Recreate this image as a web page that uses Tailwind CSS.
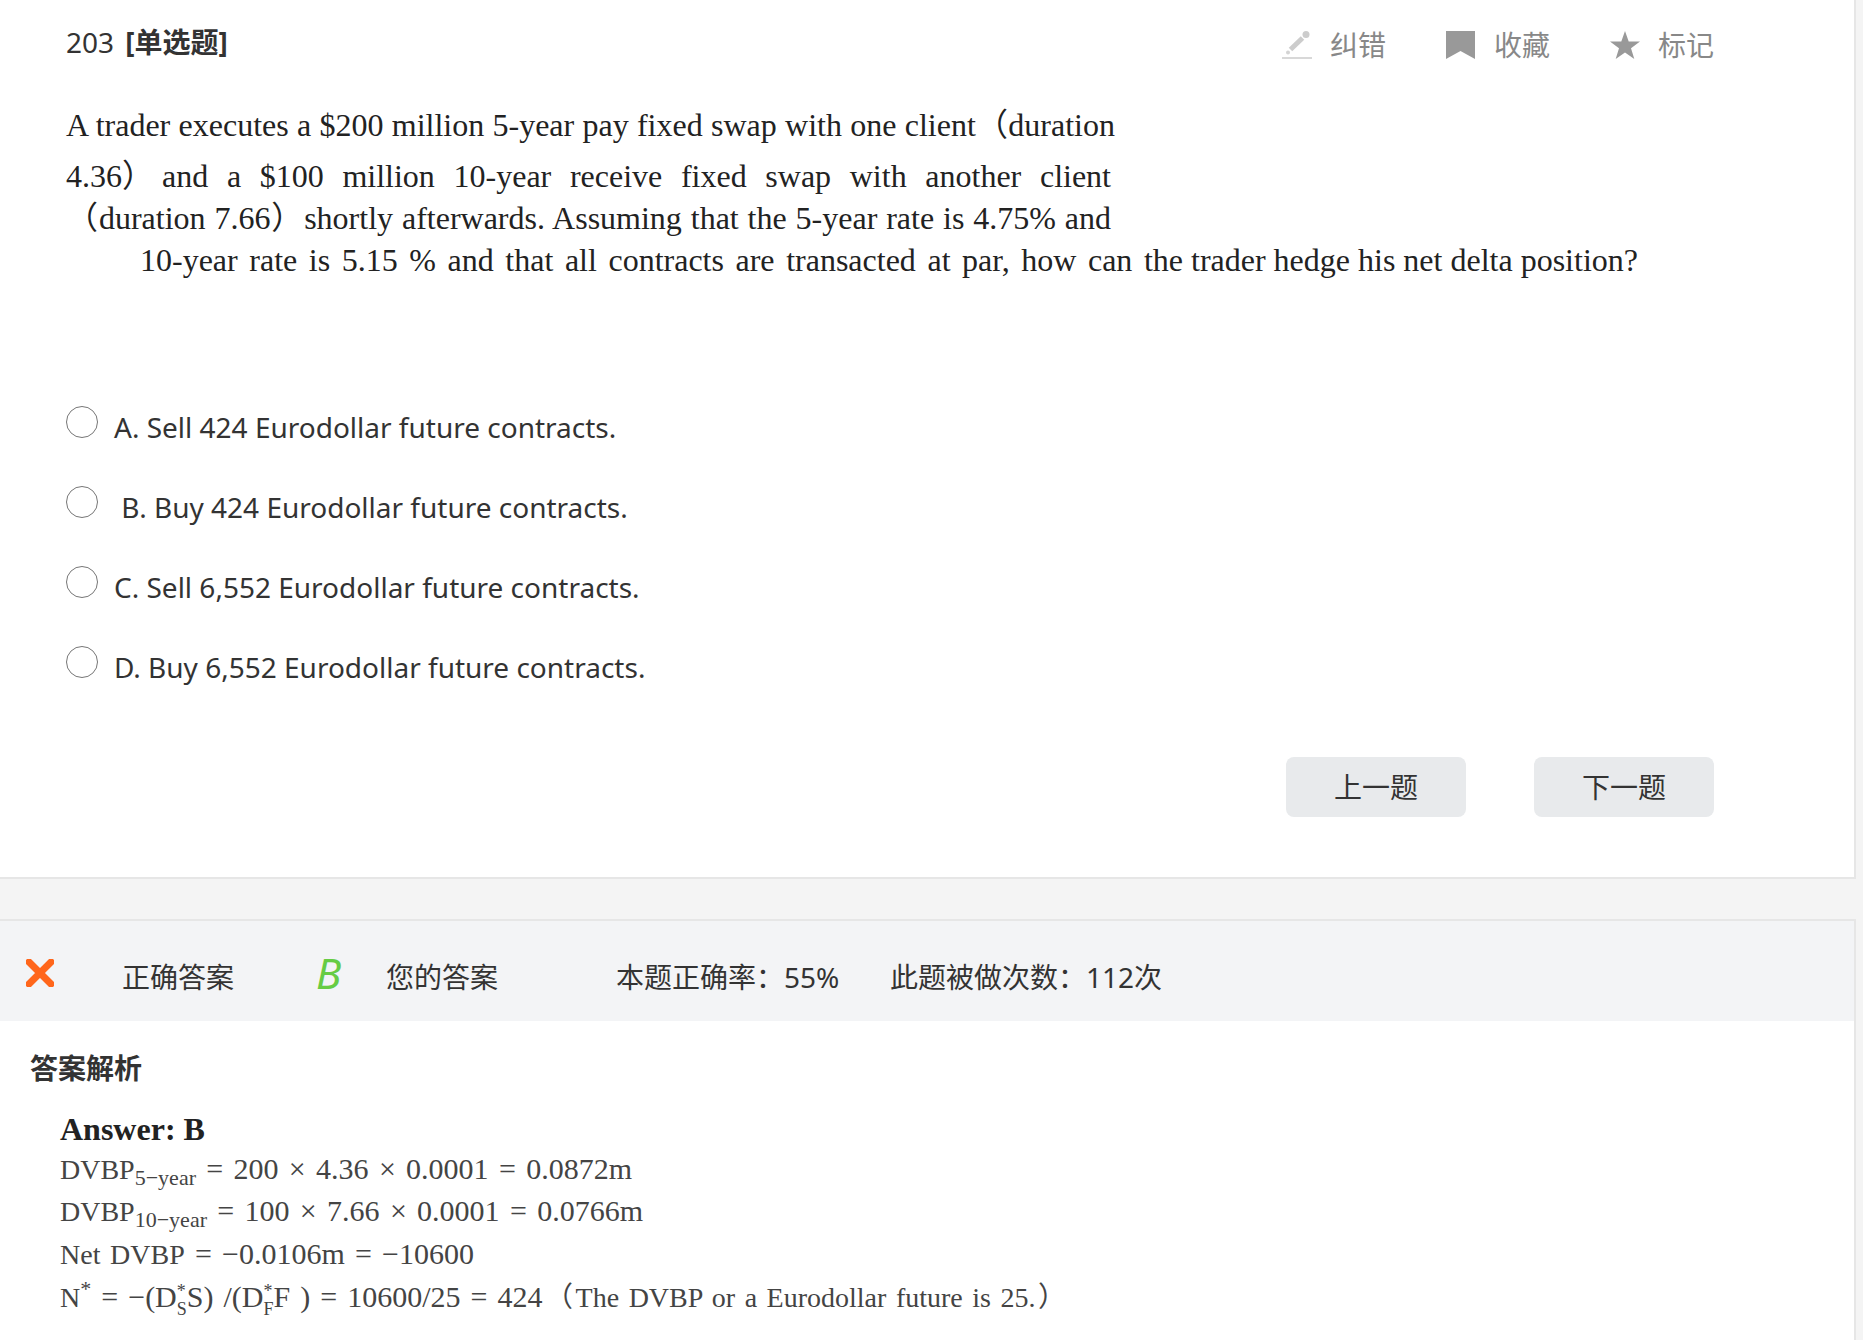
<!DOCTYPE html>
<html lang="zh-CN">
    <head>
        <meta charset="UTF-8">
        <title>203 单选题</title>
        <script src="https://cdn.jsdelivr.net/npm/@tailwindcss/browser@4"></script>
    </head>
    <body class="min-h-screen flex flex-col pr-[7px] bg-[#f4f4f4] text-[#333] text-[28px] leading-[42px] font-['Noto_Sans','Noto_Sans_CJK_SC',sans-serif]">
        <!-- Question -->
        <form class="bg-white border-r-2 border-b-2 border-[#e6e6e6] pt-6 pb-[60px] pl-[66px] pr-[140px]">
            <div class="flex items-start justify-between">
                <h1 class="leading-9">203 <b class="ml-1">[单选题]</b></h1>
                <div class="flex gap-[60px] text-[#888]">
                    <button type="button" class="flex items-center gap-[18px]">
                        <svg class="w-[30px] h-7" viewBox="0 0 30 28">
                            <path d="M8.500 18.500L20.500 7" stroke="#ccc" stroke-width="5"/>
                            <circle cx="6" cy="21.500" r="2" fill="#d4d4d4"/>
                            <circle cx="24" cy="3.500" r="3.500" fill="#ccc"/>
                            <path d="M0 27h30" stroke="#d8d8d8" stroke-width="2"/>
                        </svg>
                        纠错
                    </button>
                    <button type="button" class="flex items-center gap-[18px]">
                        <svg class="w-[30px] h-7" viewBox="0 0 30 28"><path d="M0 0h29v28l-14.500-8L0 28z" fill="#999"/></svg>
                        收藏
                    </button>
                    <button type="button" class="flex items-center gap-[18px]">
                        <svg class="w-[30px] h-7" viewBox="0 0 30 28"><path d="M15 0l3.700 10.500H30l-9 6.800L24.300 28 15 21.500 5.700 28 9 17.300 0 10.500h11.300z" fill="#999"/></svg>
                        标记
                    </button>
                </div>
            </div>

            <div class="mt-[38px] font-['Liberation_Serif','Noto_Sans_CJK_SC',serif] text-[32px] text-[#222]">
                <p class="max-w-[1049px] mb-[9px] [text-align-last:justify]">A trader executes a $200 million 5-year pay fixed swap with one client（duration</p>
                <p class="flex gap-2 max-w-[1045px]">
                    <span>4.36）</span>
                    <span class="grow [text-align-last:justify]">and a $100 million 10-year receive fixed swap with another client</span>
                </p>
                <p class="max-w-[1045px] [text-align-last:justify]">（duration 7.66）shortly afterwards. Assuming that the 5-year rate is 4.75% and</p>
                <p class="flex flex-wrap gap-x-2 pl-[74px]">
                    <span class="w-[1043px] [text-align-last:justify]">10-year rate is 5.15 % and that all contracts are transacted at par, how can the</span>
                    <span>trader hedge his net delta position?</span>
                </p>
            </div>

            <div class="mt-[101px]">
                <div class="flex items-center h-20 gap-4">
                    <input type="radio" name="answer" id="optA" class="appearance-none size-8 rounded-full border border-[#767676] bg-white checked:border-8">
                    <label for="optA" class="pt-2.5">A. Sell 424 Eurodollar future contracts.</label>
                </div>
                <div class="flex items-center h-20 gap-4">
                    <input type="radio" name="answer" id="optB" class="appearance-none size-8 rounded-full border border-[#767676] bg-white checked:border-8">
                    <label for="optB" class="pt-2.5">&nbsp;B. Buy 424 Eurodollar future contracts.</label>
                </div>
                <div class="flex items-center h-20 gap-4">
                    <input type="radio" name="answer" id="optC" class="appearance-none size-8 rounded-full border border-[#767676] bg-white checked:border-8">
                    <label for="optC" class="pt-2.5">C. Sell 6,552 Eurodollar future contracts.</label>
                </div>
                <div class="flex items-center h-20 gap-4">
                    <input type="radio" name="answer" id="optD" class="appearance-none size-8 rounded-full border border-[#767676] bg-white checked:border-8">
                    <label for="optD" class="pt-2.5">D. Buy 6,552 Eurodollar future contracts.</label>
                </div>
            </div>

            <div class="flex justify-end gap-[68px] mt-[55px]">
                <button type="button" class="w-[180px] h-[60px] rounded-lg bg-[#e8eaec]">上一题</button>
                <button type="button" class="w-[180px] h-[60px] rounded-lg bg-[#e8eaec]">下一题</button>
            </div>
        </form>

        <!-- Result and explanation -->
        <section class="grow mt-10 bg-white border-t-2 border-r-2 border-[#e6e6e6]">
            <div class="flex items-center h-[100px] pl-[26px] pt-3 bg-[#f3f4f6]">
                <div class="w-24 pb-2">
                    <svg class="size-7" viewBox="0 0 28 28"><path d="M3 3l22 22M25 3L3 25" stroke="#ff661b" stroke-width="7" stroke-linecap="square"/></svg>
                </div>
                <span class="w-[194px]">正确答案</span>
                <i class="w-[70px] pb-2 text-[42px] text-[#6c4]">B</i>
                <span class="w-[230px]">您的答案</span>
                <span class="w-[274px]">本题正确率：55%</span>
                <span>此题被做次数：112次</span>
            </div>
            <h2 class="mt-[26px] ml-[30px] font-bold">答案解析</h2>
            <div class="mt-5 ml-[60px] font-['Liberation_Serif','Noto_Sans_CJK_SC',serif] text-[30px] leading-[42px] text-[#444]">
                <p class="text-[32px] leading-[40px] font-bold text-[#222]">Answer: B</p>
                <p class="max-w-[572px] leading-[40px] [text-align-last:justify]"><span class="text-[28px]">DVBP</span><sub class="text-[22px]">5−year</sub> = 200 × 4.36 × 0.0001 = 0.0872m</p>
                <p class="max-w-[583px] [text-align-last:justify]"><span class="text-[28px]">DVBP</span><sub class="text-[22px]">10−year</sub> = 100 × 7.66 × 0.0001 = 0.0766m</p>
                <p class="max-w-[414px] [text-align-last:justify]"><span class="text-[28px]">Net DVBP</span> = −0.0106m = −10600</p>
                <p class="max-w-[1006px] [text-align-last:justify]"><span class="text-[28px]">N</span><sup class="text-[22px]">*</sup> = −(D<span class="inline-flex flex-col align-middle text-[18px] leading-[18px]"><span>*</span><span>S</span></span>S) /(D<span class="inline-flex flex-col align-middle text-[18px] leading-[18px]"><span>*</span><span>F</span></span>F ) = 10600/25 = 424<span class="text-[28px]">（The DVBP or a Eurodollar future is 25.）</span></p>
            </div>
        </section>
    </body>
</html>
